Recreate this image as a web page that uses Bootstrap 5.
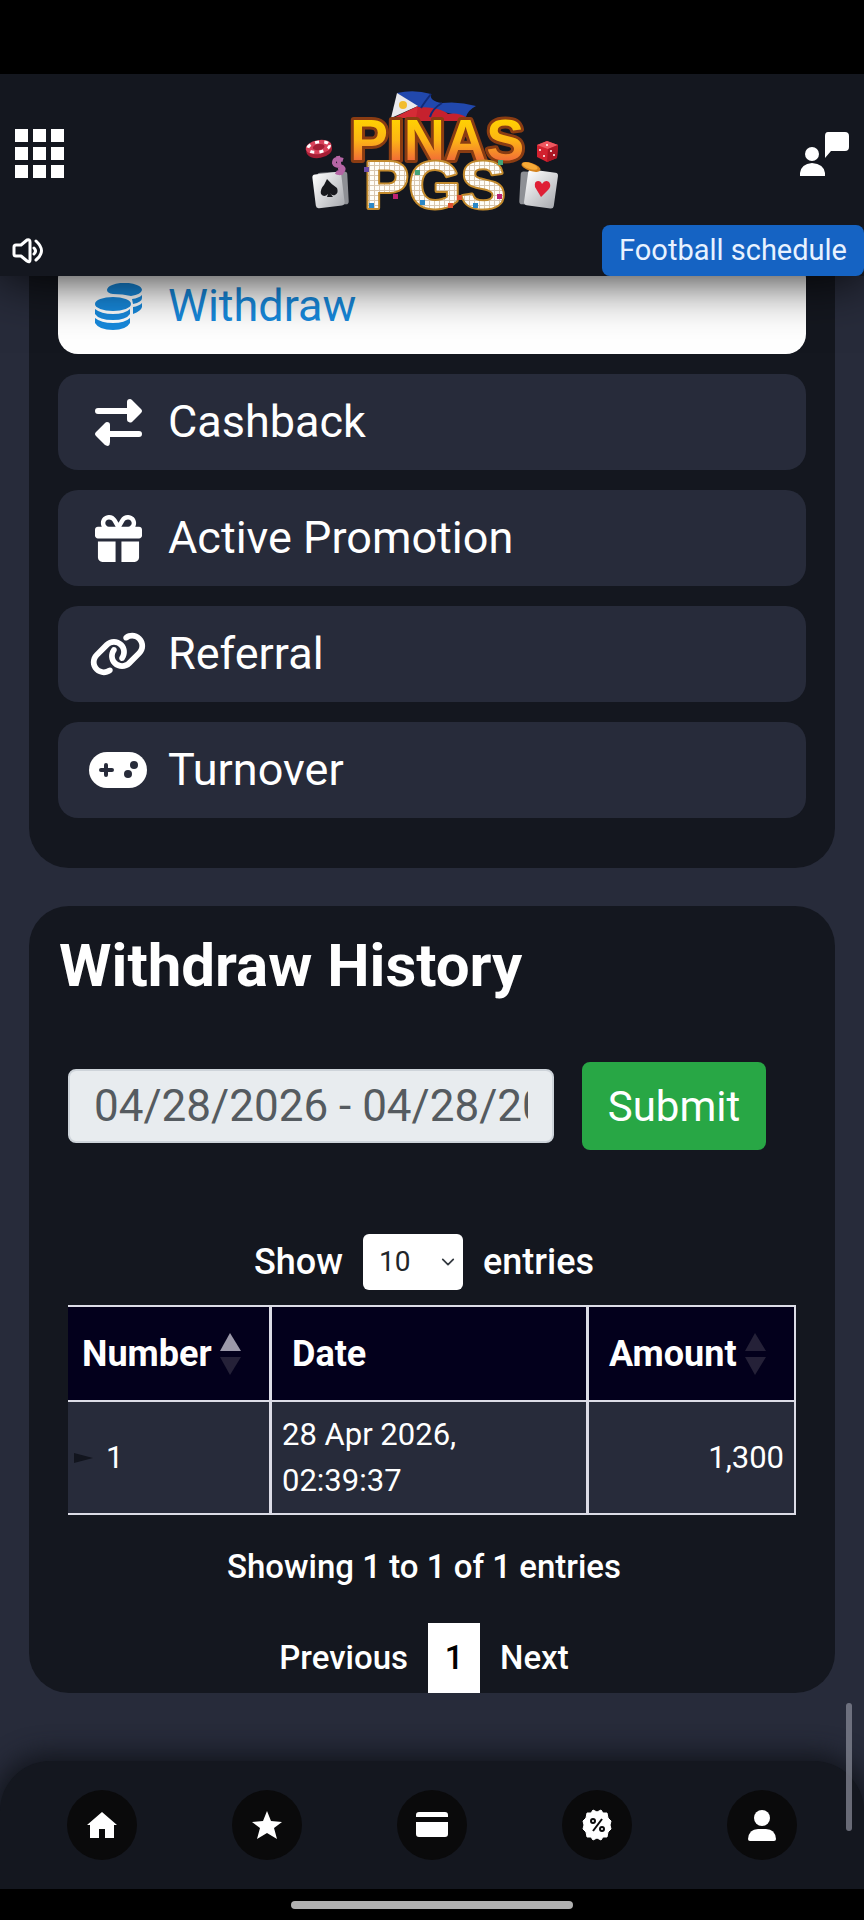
<!DOCTYPE html>
<html lang="en">
<head>
  <meta charset="UTF-8" />
  <meta name="viewport" content="width=device-width, initial-scale=1.0"/>
  <title>Withdraw History</title>
  <link href="https://cdn.jsdelivr.net/npm/bootstrap@5.3.3/dist/css/bootstrap.min.css" rel="stylesheet"/>
  <style>
    body {
      background: #272b3a;
      color: #fff;
      font-family: Roboto, "Liberation Sans", sans-serif;
    }
    svg { display: block; }

    /* Header */
    .status-strip { height: 74px; background: #000; }
    .site-header {
      background: #14171f;
      box-shadow: 0 0 52px rgba(0, 0, 0, .95);
    }
    .header-row { height: 151px; padding: 8px 15px 0; }
    .logo-art { overflow: visible; }
    .schedule-btn {
      background: #1563c3;
      color: #e8f2ff;
      font-size: 29px;
      line-height: 51px;
      padding: 0 17px;
      border: 0;
      border-radius: 8px;
    }
    .schedule-btn:hover { background: #1d70d6; color: #fff; }

    /* Panels */
    .site-main { margin-top: -48px; padding: 0 29px 225px; }
    .panel { background: #14171f; border-radius: 40px; }
    .menu-panel { gap: 20px; padding: 30px 29px 50px; margin-bottom: 38px; }
    .menu-link {
      display: flex;
      align-items: center;
      gap: 20px;
      height: 96px;
      padding: 0 30px;
      background: #272b3a;
      border-radius: 20px;
      color: #fff;
      font-size: 45px;
      text-decoration: none;
    }
    .menu-link.active { background: #fff; color: #1789dc; }
    .menu-icon { width: 60px; display: flex; justify-content: center; }

    .history-panel { padding: 30px 39px 0; }
    .history-title {
      font-size: 60px;
      font-weight: 700;
      line-height: 60px;
      margin: 0 0 66px -9px;
    }
    .date-form { gap: 28px; }
    .date-input {
      width: 486px;
      height: 74px;
      padding: 0 24px;
      font-size: 44px;
      color: #555b60;
      background: #e8ecef;
      border: 2px solid #ced4da;
      border-radius: 8px;
    }
    .submit-btn {
      width: 184px;
      height: 88px;
      padding: 0;
      font-size: 42px;
      color: #fff;
      background: #28a745;
      border-radius: 8px;
    }
    .submit-btn:hover { background: #218838; color: #fff; }
    .length-row { gap: 20px; margin-top: 84px; font-size: 36px; font-weight: 500; }
    .length-select {
      width: 100px;
      height: 56px;
      padding: 0 16px;
      font-size: 28px;
      border: 0;
      border-radius: 6px;
      background-position: right 6px center;
      background-size: 18px 14px;
    }

    /* Table */
    .history-table {
      width: 100%;
      margin-top: 15px;
      table-layout: fixed;
      border-collapse: separate;
      border-spacing: 0;
      border-top: 2px solid #dcdce6;
    }
    .history-table th, .history-table td {
      border-right: 3px solid #dcdce6;
      border-bottom: 2px solid #dcdce6;
      vertical-align: middle;
    }
    .history-table th:last-child, .history-table td:last-child { border-right-width: 2px; }
    .history-table th {
      height: 95px;
      padding: 0 14px;
      background: #03001c;
      font-size: 36px;
      font-weight: 700;
    }
    .history-table td {
      height: 113px;
      padding: 0 10px;
      background: #272b3a;
      font-size: 31px;
      line-height: 46px;
    }
    .history-table td:first-child { padding-left: 6px; }
    .history-table .amount-head, .history-table .date-head { padding: 0 20px; }
    .row-marker { margin-right: 12px; }

    .info-text { margin-top: 28px; font-size: 33px; font-weight: 500; line-height: 48px; }
    .pager { margin-top: 32px; gap: 20px; font-size: 33px; font-weight: 500; line-height: 70px; }
    .pager a { color: #fff; text-decoration: none; }
    .pager .current-page { background: #fff; color: #000; width: 52px; text-align: center; }

    /* Bottom bar */
    .bottom-bar-wrap { overflow: hidden; padding-top: 60px; }
    .bottom-bar {
      height: 128px;
      padding: 0 20px;
      background: #14171f;
      border-radius: 50px 50px 0 0;
      box-shadow: 0 0 24px 8px #14171f;
    }
    .round-link {
      width: 70px;
      height: 70px;
      border-radius: 50%;
      background: #0a0a0b;
      color: #fff;
      display: flex;
      align-items: center;
      justify-content: center;
    }
    .gesture-strip { height: 31px; background: #000; position: relative; }
    .gesture-strip span { width: 282px; height: 8px; border-radius: 4px; background: #b0b0b0; }
    .scroll-thumb {
      position: fixed;
      right: 12px;
      bottom: 89px;
      width: 6px;
      height: 128px;
      border-radius: 3px;
      background: rgba(140, 142, 155, .7);
      z-index: 1040;
    }
  </style>
</head>
<body>
  <header class="site-header sticky-top">
    <div class="status-strip"></div>
    <div class="header-row d-flex justify-content-between align-items-center">
      <a href="#" class="text-white" aria-label="Menu">
        <svg width="49" height="49" viewBox="0 0 49 49" fill="currentColor">
          <path d="M0 0h13v13H0zM18 0h13v13H18zM36 0h13v13H36zM0 18h13v13H0zM18 18h13v13H18zM36 18h13v13H36zM0 36h13v13H0zM18 36h13v13H18zM36 36h13v13H36z"/>
        </svg>
      </a>
      <a href="#" aria-label="Pinas PGS">
        <svg class="logo-art" width="254" height="126" viewBox="15 10 254 126">
          <defs>
            <linearGradient id="gold" x1="0" y1="0" x2="0" y2="1">
              <stop offset=".15" stop-color="#ffd400"/>
              <stop offset=".5" stop-color="#fdb515"/>
              <stop offset=".85" stop-color="#f0663a"/>
            </linearGradient>
            <linearGradient id="cardFill" x1="0" y1="0" x2="1" y2="1">
              <stop offset="0" stop-color="#fff"/>
              <stop offset="1" stop-color="#a9abb0"/>
            </linearGradient>
            <pattern id="tiles" width="5" height="5" patternUnits="userSpaceOnUse">
              <rect width="5" height="5" fill="#d9c7b0"/>
              <rect width="4" height="4" fill="#fffdf8"/>
            </pattern>
          </defs>
          <!-- flag -->
          <path d="M107 12Q124 8 141 13Q139 20 152 22Q169 20 186 25Q178 29 176 36L149 30L128 26Z" fill="#2148ad"/>
          <path d="M128 26Q150 26 158 33Q168 31 176 36L172 40H118Z" fill="#c6212e"/>
          <path d="M107 12L128 25L101 37Z" fill="#e9e9ec"/>
          <path d="M128 25L126 37H103Z" fill="#d52b36"/>
          <circle cx="113" cy="24" r="4" fill="#f2bd2e"/>
          <path d="M141 13Q134 22 131 27M152 22Q142 28 140 36" stroke="#122b77" stroke-width="2" fill="none"/>
          <!-- chip -->
          <g transform="rotate(-10 29 68)">
            <ellipse cx="29" cy="69" rx="13" ry="8" fill="#a51e35"/>
            <ellipse cx="29" cy="66" rx="13" ry="7" fill="#d9425a"/>
            <ellipse cx="29" cy="66" rx="11" ry="5" fill="none" stroke="#fff" stroke-width="3" stroke-dasharray="4 5"/>
            <ellipse cx="29" cy="66" rx="6" ry="3" fill="#a51e35"/>
          </g>
          <!-- spade card -->
          <rect x="28" y="91" width="30" height="33" rx="3" fill="#8e9095" transform="rotate(-3 43 107)"/>
          <rect x="24" y="92" width="29" height="34" rx="3" fill="url(#cardFill)" transform="rotate(-7 38 109)"/>
          <path d="M37 98Q42 104 47 107Q49 112 45 114Q42 115 40 112L43 116H37L38 113Q34 117 31 113Q30 108 34 104Z" fill="#17181d"/>
          <path d="M53 79Q44 76 44 82Q45 85 50 85Q56 87 52 91Q49 93 46 91M48 75L51 94" stroke="#b565a5" stroke-width="4" fill="none"/>
          <!-- die -->
          <path d="M247 64L257 60L268 64L267 77L257 81L247 76Z" fill="#d2212f"/>
          <path d="M247 64L257 60L268 64L258 68Z" fill="#ee5860"/>
          <path d="M258 68L268 64L267 77L257 81Z" fill="#ab1624"/>
          <g fill="#fff"><circle cx="257" cy="64" r="1"/><circle cx="250" cy="69" r="1"/><circle cx="254" cy="75" r="1"/><circle cx="261" cy="70" r="1"/><circle cx="264" cy="74" r="1"/></g>
          <!-- heart card -->
          <rect x="230" y="91" width="30" height="33" rx="3" fill="#8e9095" transform="rotate(3 245 107)"/>
          <rect x="236" y="90" width="30" height="36" rx="3" fill="url(#cardFill)" transform="rotate(8 251 108)"/>
          <path d="M251 116L245 106Q244 100 248 100Q251 100 252 103Q255 98 259 101Q262 105 258 109Z" fill="#df1f35"/>
          <ellipse cx="241" cy="86" rx="10" ry="4" fill="#d5831d" transform="rotate(18 241 86)"/>
          <ellipse cx="240" cy="85" rx="8" ry="3" fill="#f7ab38" transform="rotate(18 240 85)"/>
          <!-- wordmark -->
          <g font-family="Liberation Sans" font-weight="700" stroke-linejoin="round" paint-order="stroke">
            <text x="60" y="79" font-size="57" fill="url(#gold)" stroke="#8a3c12" stroke-width="6">PINAS</text>
            <text x="74" y="127" font-size="67" fill="url(#tiles)" stroke="#c38a2c" stroke-width="4">PGS</text>
          </g>
          <path d="M74 86h5v5h-5z" fill="#6b4aa5"/>
          <path d="M125 89h5v5h-5zM208 79h5v5h-5z" fill="#43a378"/>
          <path d="M103 113h5v5h-5zM207 113h5v5h-5z" fill="#bd2171"/>
          <path d="M79 122h5v5h-5zM130 119h5v5h-5zM183 122h5v5h-5z" fill="#2b87c7"/>
          <path d="M158 122h5v5h-5zM167 114h5v5h-5z" fill="#dd5230"/>
        </svg>
      </a>
      <a href="#" class="text-white" aria-label="Live chat">
        <svg width="49" height="44" viewBox="0 0 49 44" fill="currentColor">
          <circle cx="12" cy="22" r="7"/>
          <path d="M0 44V41Q1 32 12 31Q24 32 25 41V44ZM28 0H45Q49 0 49 4V15Q49 19 45 19H31L25 26V4Q25 0 28 0Z"/>
        </svg>
      </a>
    </div>
    <div class="d-flex justify-content-between align-items-center">
      <svg class="ms-2" width="38" height="26" viewBox="-5 0 38 26" fill="none" stroke="#fff" stroke-width="3" stroke-linejoin="round" stroke-linecap="round">
        <path d="M3 7H8L14 2Q17 1 17 4V22Q17 25 14 23L8 18H3Q1 18 1 16V9Q1 7 3 7ZM21 10Q24 13 21 16M23 3Q34 13 23 22"/>
      </svg>
      <a href="#" class="btn schedule-btn">Football schedule</a>
    </div>
  </header>

  <main class="site-main">
    <nav class="panel menu-panel d-grid" aria-label="Account">
      <a href="#" class="menu-link active">
        <span class="menu-icon">
          <svg width="47" height="47" viewBox="0 0 47 47" fill="currentColor">
            <path d="M12 7A17 7 0 0 1 47 7A17 7 0 0 1 36 13Q28 11 18 11Q12 10 12 7Z"/>
            <path d="M37 16Q44 15 47 12V15Q47 19 38 21ZM38 24Q44 23 47 20V24Q46 28 38 31Z"/>
            <ellipse cx="18" cy="21" rx="18" ry="7"/>
            <path d="M0 26Q6 31 18 31Q30 31 35 26V31Q31 37 18 37Q4 37 0 31ZM0 35Q6 40 18 40Q30 40 35 35V40Q31 47 18 47Q4 47 0 40Z"/>
          </svg>
        </span>
        <span>Withdraw</span>
      </a>
      <a href="#" class="menu-link">
        <span class="menu-icon">
          <svg width="47" height="47" viewBox="0 0 47 47" fill="currentColor">
            <path d="M3 9H32V3Q32 0 35 0Q36 0 37 1L46 10Q48 12 46 14L37 23Q35 24 34 23Q32 23 32 20V15H3Q0 15 0 12Q0 9 3 9ZM44 32H15V26Q15 23 12 23Q11 23 10 24L1 33Q-1 35 1 37L10 46Q12 47 13 47Q15 46 15 43V38H44Q47 38 47 35Q47 32 44 32Z"/>
          </svg>
        </span>
        <span>Cashback</span>
      </a>
      <a href="#" class="menu-link">
        <span class="menu-icon">
          <svg width="47" height="47" viewBox="0 0 512 512" fill="currentColor">
            <path d="M190.500 68.800L225.300 128H224 152c-22.100 0-40-17.900-40-40s17.900-40 40-40h2.200c14.900 0 28.800 7.900 36.300 20.800zM64 88c0 14.400 3.500 28 9.600 40H32c-17.700 0-32 14.300-32 32v64c0 17.700 14.300 32 32 32H480c17.700 0 32-14.300 32-32V160c0-17.700-14.300-32-32-32H438.400c6.100-12 9.600-25.600 9.600-40c0-48.600-39.400-88-88-88h-2.200c-31.900 0-61.500 16.900-77.700 44.400L256 85.500l-24.100-41C215.700 16.900 186.100 0 154.200 0H152C103.400 0 64 39.400 64 88zm336 0c0 22.100-17.900 40-40 40H288h-1.300l34.800-59.200C329.100 55.900 342.900 48 357.800 48H360c22.100 0 40 17.900 40 40zM32 288V464c0 26.500 21.500 48 48 48H224V288H32zM288 512H432c26.500 0 48-21.500 48-48V288H288V512z"/>
          </svg>
        </span>
        <span>Active Promotion</span>
      </a>
      <a href="#" class="menu-link">
        <span class="menu-icon">
          <svg width="58" height="46" viewBox="0 0 640 512" fill="currentColor">
            <path d="M579.800 267.700c56.500-56.500 56.500-148 0-204.500c-50-50-128.800-56.500-186.300-15.400l-1.600 1.100c-14.400 10.300-17.700 30.300-7.400 44.600s30.300 17.700 44.600 7.400l1.600-1.100c32.100-22.900 76-19.300 103.800 8.600c31.500 31.500 31.500 82.500 0 114L422.300 334.800c-31.500 31.500-82.500 31.500-114 0c-27.900-27.900-31.500-71.800-8.600-103.800l1.100-1.600c10.300-14.400 6.900-34.400-7.400-44.600s-34.400-6.900-44.600 7.400l-1.100 1.600C206.500 251.200 213 330 263 380c56.500 56.500 148 56.500 204.500 0L579.800 267.700zM60.200 244.300c-56.500 56.500-56.500 148 0 204.500c50 50 128.800 56.500 186.300 15.400l1.600-1.100c14.400-10.300 17.700-30.300 7.400-44.600s-30.300-17.700-44.600-7.400l-1.600 1.100c-32.100 22.900-76 19.300-103.800-8.600C74 372 74 321 105.500 289.500L217.700 177.200c31.500-31.500 82.500-31.500 114 0c27.900 27.900 31.500 71.800 8.600 103.900l-1.100 1.600c-10.300 14.400-6.900 34.400 7.400 44.600s34.400 6.900 44.600-7.400l1.100-1.600C433.500 260.800 427 182 377 132c-56.500-56.500-148-56.500-204.500 0L60.200 244.300z"/>
          </svg>
        </span>
        <span>Referral</span>
      </a>
      <a href="#" class="menu-link">
        <span class="menu-icon">
          <svg width="58" height="36" viewBox="0 0 58 36">
            <rect width="58" height="36" rx="18" fill="currentColor"/>
            <path d="M17 13V23M12 18H23" stroke="#272b3a" stroke-width="4" stroke-linecap="round"/>
            <circle cx="45" cy="13" r="4" fill="#272b3a"/>
            <circle cx="39" cy="22" r="4" fill="#272b3a"/>
          </svg>
        </span>
        <span>Turnover</span>
      </a>
    </nav>

    <section class="panel history-panel">
      <h2 class="history-title">Withdraw History</h2>
      <form class="date-form d-flex align-items-center">
        <input type="text" class="date-input" value="04/28/2026 - 04/28/2026" aria-label="Date range" readonly />
        <button type="button" class="btn submit-btn">Submit</button>
      </form>

      <div class="length-row d-flex justify-content-center align-items-center pe-3">
        <label for="entryCount">Show</label>
        <select id="entryCount" class="form-select length-select">
          <option>10</option>
          <option>25</option>
          <option>50</option>
        </select>
        <span>entries</span>
      </div>

      <table class="history-table">
        <colgroup>
          <col style="width: 204px" />
          <col />
          <col style="width: 207px" />
        </colgroup>
        <thead>
          <tr>
            <th scope="col">
              <div class="d-flex align-items-center gap-2">
                Number
                <svg width="21" height="44" viewBox="0 0 21 44"><path d="M0 19L10 1L21 19Z" fill="#9c99aa"/><path d="M0 25H21L10 43Z" fill="#252138"/></svg>
              </div>
            </th>
            <th scope="col" class="date-head">Date</th>
            <th scope="col" class="amount-head">
              <div class="d-flex align-items-center gap-2">
                Amount
                <svg width="21" height="44" viewBox="0 0 21 44" fill="#252138"><path d="M0 19L10 1L21 19ZM0 25H21L10 43Z"/></svg>
              </div>
            </th>
          </tr>
        </thead>
        <tbody>
          <tr>
            <td>
              <div class="d-flex align-items-center">
                <svg class="row-marker" width="20" height="10" viewBox="0 0 20 10"><path d="M0 0L19 5L0 10Z" fill="#12151e"/></svg>
                1
              </div>
            </td>
            <td>28 Apr 2026,<br>02:39:37</td>
            <td class="text-end">1,300</td>
          </tr>
        </tbody>
      </table>

      <div class="info-text text-center pe-3">Showing 1 to 1 of 1 entries</div>
      <nav class="pager d-flex justify-content-center pe-3" aria-label="Pages">
        <a href="#">Previous</a>
        <a href="#" class="current-page">1</a>
        <a href="#">Next</a>
      </nav>
    </section>
  </main>

  <footer class="fixed-bottom bottom-bar-wrap">
    <nav class="bottom-bar d-flex justify-content-around align-items-center" aria-label="Main">
      <a href="#" class="round-link" aria-label="Home">
        <svg width="30" height="30" viewBox="0 0 30 30" fill="currentColor"><path d="M15 2L30 15H27V28H18V19H12V28H3V15H0Z"/></svg>
      </a>
      <a href="#" class="round-link" aria-label="Favourites">
        <svg width="30" height="30" viewBox="0 0 30 30" fill="currentColor"><path d="M15 1L19 11L30 12L22 18L25 29L15 23L5 29L8 18L0 12L11 11Z"/></svg>
      </a>
      <a href="#" class="round-link" aria-label="Wallet">
        <svg width="32" height="26" viewBox="0 0 32 26" fill="currentColor"><path d="M3 0H29Q32 0 32 3V5H0V3Q0 0 3 0ZM0 10H32V22Q32 25 29 25H3Q0 25 0 22Z"/></svg>
      </a>
      <a href="#" class="round-link" aria-label="Promotions">
        <svg width="32" height="32" viewBox="0 0 32 32">
          <path d="M16 3L20 1L22 4L26 4L27 9L30 12L29 16L30 20L27 23L26 28L22 28L20 31L16 29L12 31L10 28L6 28L5 23L2 20L3 16L2 12L5 9L6 4L10 4L12 1Z" fill="#fff" stroke="#fff" stroke-width="1" stroke-linejoin="round"/>
          <g fill="none" stroke="#0a0a0b" stroke-width="2"><path d="M21 10L12 22"/><circle cx="12" cy="12" r="2"/><circle cx="21" cy="20" r="2"/></g>
        </svg>
      </a>
      <a href="#" class="round-link" aria-label="Profile">
        <svg width="28" height="31" viewBox="0 0 28 31" fill="currentColor"><circle cx="14" cy="8" r="8"/><path d="M0 29Q1 19 10 19H18Q27 19 28 29Q28 31 26 31H2Q0 31 0 29Z"/></svg>
      </a>
    </nav>
    <div class="gesture-strip d-flex justify-content-center align-items-center"><span></span></div>
  </footer>
  <div class="scroll-thumb"></div>

  <script src="https://cdn.jsdelivr.net/npm/bootstrap@5.3.3/dist/js/bootstrap.bundle.min.js"></script>
</body>
</html>
